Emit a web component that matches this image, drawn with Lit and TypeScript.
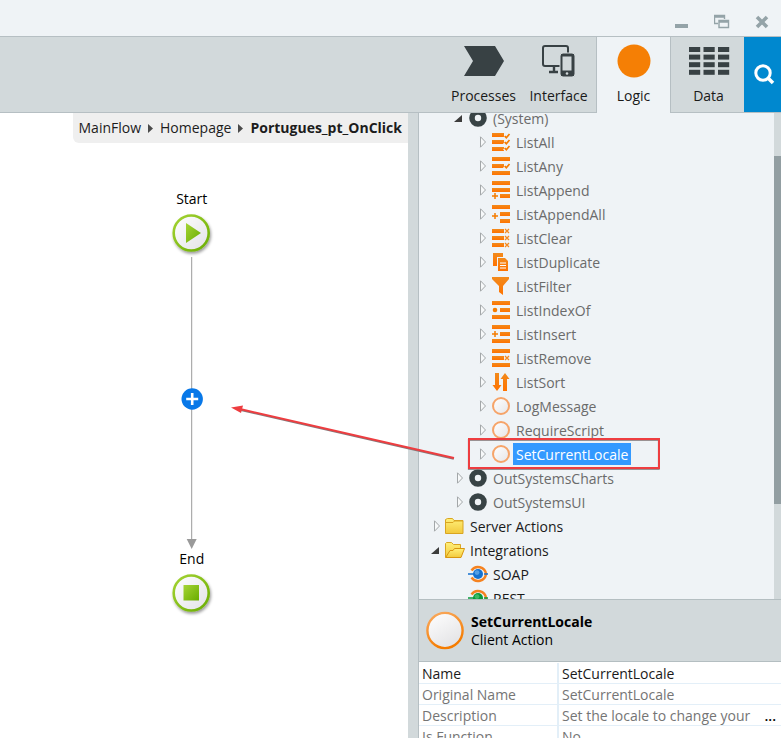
import { LitElement, html, svg, css, nothing, TemplateResult } from "lit";
import { customElement, property, state } from "lit/decorators.js";
import { classMap } from "lit/directives/class-map.js";

type Row = { label: string; icon: string; level: number; open?: boolean; leaf?: boolean; own?: boolean };

const rows: Row[] = [
  { label: "(System)", icon: "module", level: 1, open: true },
  { label: "ListAll", icon: "all", level: 2 },
  { label: "ListAny", icon: "any", level: 2 },
  { label: "ListAppend", icon: "append", level: 2 },
  { label: "ListAppendAll", icon: "appendAll", level: 2 },
  { label: "ListClear", icon: "clear", level: 2 },
  { label: "ListDuplicate", icon: "duplicate", level: 2 },
  { label: "ListFilter", icon: "filter", level: 2 },
  { label: "ListIndexOf", icon: "indexOf", level: 2 },
  { label: "ListInsert", icon: "insert", level: 2 },
  { label: "ListRemove", icon: "remove", level: 2 },
  { label: "ListSort", icon: "sort", level: 2 },
  { label: "LogMessage", icon: "action", level: 2 },
  { label: "RequireScript", icon: "action", level: 2 },
  { label: "SetCurrentLocale", icon: "action", level: 2 },
  { label: "OutSystemsCharts", icon: "module", level: 1 },
  { label: "OutSystemsUI", icon: "module", level: 1 },
  { label: "Server Actions", icon: "folder", level: 0, own: true },
  { label: "Integrations", icon: "folderOpen", level: 0, open: true, own: true },
  { label: "SOAP", icon: "soap", level: 1, leaf: true, own: true },
  { label: "REST", icon: "rest", level: 1, leaf: true, own: true },
];

const bar = (x: number, y: number, w: number) => svg`<rect x=${x} y=${y} width=${w} height="4" fill="url(#o)"/>`;
const check = (y: number) =>
  svg`<path d="M12.5 ${y + 2.2}L14.3 ${y + 4}L17.6 ${y}" fill="none" stroke="#eff3f6" stroke-width="4"/><path d="M12.7 ${y + 2}L14.3 ${y + 3.7}L17.5 ${y}" fill="none" stroke="#f57c00" stroke-width="1.7"/>`;
const cross = (y: number) => svg`<path d="M13 ${y}l4 4m0-4l-4 4" stroke="#f58a1f" stroke-width="1.3"/>`;
const plus = (y: number) => svg`<path d="M0 ${y}h6M3 ${y - 3}v6" stroke="#f57c00" stroke-width="1.5"/>`;
const plug = (c: string, d: string) => svg`
  <path d="M2.5 5.5A8 8 0 0 1 17 9A8 8 0 0 1 2.5 12.5" fill="none" stroke="#f58220" stroke-width="2.4"/>
  <path d="M-1 9h7M15 9h4" stroke=${c} stroke-width="1.6"/>
  <circle cx="9" cy="9" r="5" fill=${c}/><circle cx="8" cy="7.6" r="2.4" fill=${d} opacity=".6"/>`;

const glyphs: Record<string, TemplateResult<2>> = {
  module: svg`<circle cx="9" cy="9" r="6" fill="#eff3f6" stroke="#384345" stroke-width="5.6"/>`,
  all: svg`${bar(0, 0, 12)}${bar(0, 7, 12)}${bar(0, 14, 12)}${check(1)}${check(7)}${check(13)}`,
  any: svg`${bar(0, 0, 18)}${bar(0, 7, 12)}${bar(0, 14, 18)}${check(7)}`,
  append: svg`${bar(0, 0, 18)}${bar(0, 7, 18)}${bar(8, 13, 10)}${plus(15)}`,
  appendAll: svg`${bar(0, 0, 18)}${bar(8, 7, 10)}${bar(8, 14, 10)}${plus(11)}`,
  clear: svg`${bar(0, 0, 12)}${bar(0, 7, 12)}${bar(0, 14, 12)}${cross(0)}${cross(7)}${cross(14)}`,
  duplicate: svg`<path d="M1 0h10v4H5v9H1z" fill="url(#o)"/><path d="M6 5h7l3 3v10H6z" fill="url(#o)"/><path d="M8 10h6M8 12.5h6M8 15h6" stroke="#fff" stroke-width="1"/>`,
  filter: svg`<path d="M0 0h17v2l-6 7v9l-4-3V9L0 2z" fill="url(#o)"/>`,
  indexOf: svg`${bar(0, 0, 18)}${bar(8, 7, 10)}${bar(0, 14, 18)}<circle cx="3" cy="9" r="2.3" fill="#f57c00"/>`,
  insert: svg`${bar(0, 0, 18)}${bar(8, 7, 10)}${bar(0, 14, 18)}${plus(9)}`,
  remove: svg`${bar(0, 0, 18)}${bar(0, 7, 12)}${bar(0, 14, 18)}${cross(7)}`,
  sort: svg`<path d="M3 0h4v12h2.500L5 18L.5 12H3z" fill="url(#o)"/><path d="M11 18h4V6h2.500L13 0L8.500 6H11z" fill="url(#o)"/>`,
  action: svg`<circle cx="9" cy="9" r="8" fill="url(#w)" stroke="#f6a469" stroke-width="2"/>`,
  folder: svg`<path d="M-.5 16.500V2.500l2-1h5l1.500 2h9v13z" fill="url(#y)" stroke="#d9a521"/><path d="M0 5.500h7l1.500-1.500H17" fill="none" stroke="#d9a521"/>`,
  folderOpen: svg`<path d="M-.5 16.500V2.500l1-1h5l2 2h7v4" fill="url(#y)" stroke="#d9a521"/><path d="M-.3 16.500L4 9.500h3l1.500-2H18.500l-3.500 9z" fill="url(#y)" stroke="#d9960f"/>`,
  soap: plug("#1672d0", "#7fbcf0"),
  rest: plug("#0a9a3c", "#5fd07f"),
};

const icon = (name: string) => svg`<svg class="icon" viewBox="0 0 18 18" aria-hidden="true">
  <defs>
    <linearGradient id="o" x2="0" y2="1"><stop stop-color="#f28a1c"/><stop offset="1" stop-color="#ff7300"/></linearGradient>
    <linearGradient id="w" x2="1" y2="1"><stop stop-color="#fff"/><stop offset="1" stop-color="#e6e6e8"/></linearGradient>
    <linearGradient id="y" x2="0" y2="1"><stop stop-color="#fff07a"/><stop offset="1" stop-color="#f2c93c"/></linearGradient>
  </defs>${glyphs[name]}</svg>`;

@customElement("module-tree")
export class ModuleTree extends LitElement {
  @property() selected = "";

  static styles = css`
    :host { display: flex; min-height: 0; overflow: hidden; background: #eff3f6; }
    .tree { flex: 1; min-width: 0; margin: -7px 0 0; padding: 0; list-style: none; }
    .row { display: flex; align-items: center; height: 24px; padding-left: 14px; color: #6b6b6b; white-space: nowrap; }
    .level1 { padding-left: 37px; }
    .level2 { padding-left: 60px; }
    .own { color: #1a1a1a; }
    .twist { flex: none; width: 10px; height: 12px; margin-right: 3px; padding: 0; border: 0; background: none; }
    .twist svg { display: block; width: 10px; height: 12px; overflow: visible; }
    .icon { flex: none; width: 18px; height: 18px; margin-right: 3px; overflow: visible; }
    .label { padding: 2px 3px 0; line-height: 20px; }
    .selected { background: #3399ff; color: #fff; }
    .track { flex: none; width: 7px; background: #d2d9db; padding-top: 43px; box-sizing: border-box; }
    .thumb { height: 80%; max-height: 348px; background: #929ea2; }
  `;

  render() {
    return html`
      <ul class="tree" role="tree" aria-label="Logic elements">
        ${rows.map((r) => html`
          <li class=${classMap({ row: true, own: !!r.own, level1: r.level === 1, level2: r.level === 2 })}
              role="treeitem" aria-selected=${r.label === this.selected}>
            <button class="twist" aria-label="Toggle ${r.label}" ?disabled=${!!r.leaf}>
              ${r.leaf ? nothing : html`<svg viewBox="0 0 10 12">${r.open
                ? svg`<path d="M6 3v7H-2z" fill="#3c3c3c"/>`
                : svg`<path d="M1.500 .8v10.400l5-5.200z" fill="#f7f9fa" stroke="#a3a7a9"/>`}</svg>`}
            </button>
            ${icon(r.icon)}
            <span class=${classMap({ label: true, selected: r.label === this.selected })}>${r.label}</span>
          </li>`)}
      </ul>
      <div class="track"><div class="thumb"></div></div>`;
  }
}

@customElement("flow-canvas")
export class FlowCanvas extends LitElement {
  static styles = css`
    :host { display: block; min-width: 0; background: #fff; color: #000; }
    .crumbs { display: flex; align-items: center; width: fit-content; height: 30px; margin-left: auto; padding: 0 6px;
      box-sizing: border-box; background: #efefef; border-bottom-left-radius: 6px; gap: 7px; white-space: nowrap; }
    .crumbs a { color: #1c1c1c; text-decoration: none; }
    .crumbs svg { width: 5px; height: 9px; }
    .crumbs .current { font-weight: 700; }
    .flow { display: flex; flex-direction: column; align-items: center; width: 94%; padding-top: 46px; }
    .name { line-height: 20px; }
    .node { display: block; width: 48px; height: 48px; }
    .link { display: block; width: 24px; height: 292px; }
  `;

  private node(shape: TemplateResult<2>) {
    return html`<svg class="node" viewBox="0 0 48 48" aria-hidden="true">
      <defs>
        <linearGradient id="ring" x2="1" y2="1"><stop stop-color="#a5d435"/><stop offset="1" stop-color="#69ad00"/></linearGradient>
        <linearGradient id="face" x2="1" y2="1"><stop stop-color="#fff"/><stop offset="1" stop-color="#e2e2e6"/></linearGradient>
        <filter id="shade" x="-20%" y="-20%" width="150%" height="150%"><feDropShadow dx="1" dy="2" stdDeviation="1.500" flood-opacity=".4"/></filter>
      </defs>
      <circle cx="23.200" cy="24" r="17.500" fill="url(#face)" stroke="url(#ring)" stroke-width="2.600" filter="url(#shade)"/>
      ${shape}</svg>`;
  }

  render() {
    const sep = html`<svg viewBox="0 0 5 9" aria-hidden="true"><path d="M0 0l5 4.500L0 9z" fill="#4a4a4a"/></svg>`;
    return html`
      <nav class="crumbs" aria-label="Breadcrumb">
        <a href="#mainflow">MainFlow</a>${sep}<a href="#homepage">Homepage</a>${sep}<a class="current" href="#onclick">Portugues_pt_OnClick</a>
      </nav>
      <div class="flow">
        <div class="name">Start</div>
        ${this.node(svg`<path d="M18 14v20l15-10z" fill="url(#ring)"/>`)}
        <svg class="link" viewBox="0 0 24 292" aria-hidden="true">
          <path d="M11.700 0v284" stroke="#9a9a9a"/><path d="M6.700 282h10l-5 10z" fill="#9a9a9a"/>
          <circle cx="12.200" cy="142" r="10.700" fill="#0878e8"/><path d="M6.200 142h12M12.200 136v12" stroke="#fff" stroke-width="2.600"/>
        </svg>
        <div class="name">End</div>
        ${this.node(svg`<rect x="15.500" y="16" width="15.500" height="15.500" fill="url(#ring)"/>`)}
      </div>`;
  }
}

@customElement("property-panel")
export class PropertyPanel extends LitElement {
  static styles = css`
    :host { display: block; min-height: 0; overflow: hidden; background: #fff; }
    .head { display: flex; align-items: center; gap: 6px; height: 63px; box-sizing: border-box; padding-left: 7px;
      background: #d2d9db; border: solid #b4bec1; border-width: 1px 0; color: #000; line-height: 18px; }
    .head svg { width: 39px; height: 39px; }
    .title { font-weight: 700; }
    .props { width: 100%; margin-top: 1px; border-collapse: collapse; table-layout: fixed; color: #757575; }
    .props th, .props td { padding: 1px 3px 0; line-height: 19px; font-weight: 400; text-align: left;
      white-space: nowrap; overflow: hidden; border-bottom: 1px solid #e3eff8; }
    .props th { width: 132px; border-right: 2px solid #e3eff8; }
    .props tr.editable { color: #1a1a1a; }
    .cell { display: flex; justify-content: space-between; }
    .more { padding: 0 2px; border: 0; background: none; font: inherit; line-height: 19px; font-weight: 600; color: #000; }
  `;

  render() {
    const data: [string, string][] = [
      ["Name", "SetCurrentLocale"],
      ["Original Name", "SetCurrentLocale"],
      ["Description", "Set the locale to change your"],
      ["Is Function", "No"],
    ];
    return html`
      <header class="head">
        <svg viewBox="0 0 39 39" aria-hidden="true">
          <defs>
            <linearGradient id="edge" x2=".4" y2="1"><stop stop-color="#f9ab62"/><stop offset="1" stop-color="#f57c00"/></linearGradient>
            <linearGradient id="fill" x2=".6" y2="1"><stop stop-color="#fff"/><stop offset="1" stop-color="#e4e4e6"/></linearGradient>
          </defs>
          <circle cx="19" cy="19.500" r="17.600" fill="url(#fill)" stroke="url(#edge)" stroke-width="2.400"/>
        </svg>
        <div><div class="title">SetCurrentLocale</div><div>Client Action</div></div>
      </header>
      <table class="props">
        ${data.map(([k, v], i) => html`<tr class=${classMap({ editable: i === 0 })}>
          <th scope="row">${k}</th>
          <td><div class="cell"><span>${v}</span>${k === "Description"
            ? html`<button class="more" aria-label="Edit description">...</button>` : nothing}</div></td>
        </tr>`)}
      </table>`;
  }
}

const tabs = [
  { name: "Processes", art: svg`<path d="M0 5h31l9 15-9 15H0l9-15z" fill="#384144"/>` },
  { name: "Interface", art: svg`<g fill="none" stroke="#384144"><rect x="4" y="5" width="25" height="20" rx="2" stroke-width="2"/>
      <path d="M10 31h9M15 25v6" stroke-width="2.400"/><rect x="21" y="12" width="15" height="24" rx="3" fill="#384144" stroke="#d2d9db"/>
      <rect x="23.500" y="15.500" width="9" height="14" fill="#d2d9db" stroke="none"/><circle cx="28" cy="32.500" r="1.300" fill="#d2d9db" stroke="none"/></g>` },
  { name: "Logic", art: svg`<circle cx="20" cy="20" r="16.500" fill="#f57f05"/>` },
  { name: "Data", art: svg`${[0, 1, 2, 3].map((r) => [0, 1, 2].map((c) =>
      svg`<rect x=${c * 14.5} y=${6 + r * 7.6} width="11.200" height="5" fill="#384144"/>`))}` },
];

@customElement("app-root")
export class AppRoot extends LitElement {
  @state() private active = "Logic";

  static styles = css`
    :host { display: flex; flex-direction: column; height: 100vh; overflow: hidden; background: #eff3f6;
      font: 14px/20px "Open Sans", "Noto Sans", sans-serif; }
    button { padding: 0; border: 0; background: none; font: inherit; color: inherit; }
    .titlebar { display: flex; flex: none; justify-content: flex-end; align-items: flex-end; height: 36px; gap: 24px; padding: 0 11px 6px; box-sizing: border-box; }
    .titlebar button, .titlebar svg { display: block; width: 16px; height: 16px; }
    .toolbar { display: flex; flex: none; justify-content: flex-end; height: 77px; box-sizing: border-box; background: #d2d9db;
      border: solid #b6bfc3; border-width: 1px 0; color: #1a1a1a; }
    .tab { display: flex; flex-direction: column; align-items: center; width: 75px; padding-top: 4px; box-sizing: border-box; }
    .tab:nth-of-type(4) { width: 73px; padding-left: 2px; }
    .tab svg { width: 40px; height: 40px; overflow: visible; }
    .tab span { margin-top: 5px; line-height: 20px; }
    .active { height: 76px; background: #eff3f6; border: solid #b6bfc3; border-width: 0 1px; }
    .search { display: grid; place-items: center; width: 37px; background: #0088cf; }
    .search svg { width: 22px; height: 22px; overflow: visible; }
    .work { position: relative; display: grid; flex: 1; min-height: 0; grid-template-columns: minmax(0, 1fr) 10px minmax(0, 363px); }
    .splitter { background: #d2d9db; }
    .side { display: grid; grid-template-rows: minmax(0, 486fr) minmax(0, 139fr); min-height: 0; border-left: 1px solid #b6bfc3; }
    .callout { position: absolute; top: 0; right: 0; width: 551px; height: 360px; pointer-events: none; }
  `;

  render() {
    return html`
      <header class="titlebar">
        <button aria-label="Minimize"><svg viewBox="0 0 16 16"><path d="M1 10h13v4H1z" fill="#94a3a8"/></svg></button>
        <button aria-label="Restore"><svg viewBox="0 0 16 16" fill="none" stroke="#94a3a8"><path d="M4 9.500H.5v-8h10V5M.5 3h10" stroke-width="1.400"/><path d="M5 6.500h9.500v7H5zM5 8h9.500" stroke-width="1.400"/></svg></button>
        <button aria-label="Close"><svg viewBox="0 0 16 16"><path d="M3 3l10 10M13 3L3 13" stroke="#94a3a8" stroke-width="3.600"/></svg></button>
      </header>
      <nav class="toolbar">
        ${tabs.map((t) => html`<button class=${classMap({ tab: true, active: t.name === this.active })}
          @click=${() => (this.active = t.name)}><svg viewBox="0 0 40 40" aria-hidden="true">${t.art}</svg><span>${t.name}</span></button>`)}
        <button class="search" aria-label="Search"><svg viewBox="0 0 22 22" fill="none" stroke="#fff"><circle cx="11" cy="9" r="7.200" stroke-width="3"/><path d="M16 14l5 5" stroke-width="3.600"/></svg></button>
      </nav>
      <main class="work">
        <flow-canvas></flow-canvas>
        <div class="splitter"></div>
        <section class="side">
          <module-tree selected="SetCurrentLocale"></module-tree>
          <property-panel></property-panel>
        </section>
        <svg class="callout" viewBox="0 0 551 360" aria-hidden="true">
          <g transform="translate(-.2 .9)" stroke="#85787a" fill="none" stroke-width="1.800"><path d="M224 345L10 296"/><rect x="239" y="326" width="190" height="29"/></g>
          <g stroke="#ee3d40" fill="none" stroke-width="2"><path d="M224 345L10 296"/><rect x="239" y="326" width="190" height="29"/></g>
          <path d="M1 294.500l12-2-2 7.500z" fill="#ee3d40"/>
        </svg>
      </main>`;
  }
}
